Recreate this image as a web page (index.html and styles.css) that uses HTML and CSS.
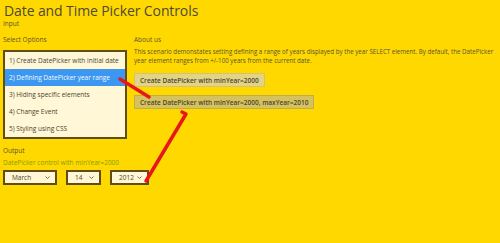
FILE: index.html
```html
<!DOCTYPE html>
<html lang="en">
<head>
    <meta charset="UTF-8">
    <title>Date and Time Picker Controls</title>
    <link rel="stylesheet" href="styles.css">
</head>
<body>
    <h1 class="title">Date and Time Picker Controls</h1>
    <div class="section-label">Input</div>

    <div class="input-row">
        <div class="options">
            <div class="sub-label">Select Options</div>
            <ul class="scenario-list">
                <li>1) Create DatePicker with initial date</li>
                <li class="selected">2) Defining DatePicker year range</li>
                <li>3) Hiding specific elements</li>
                <li>4) Change Event</li>
                <li>5) Styling using CSS</li>
            </ul>
        </div>

        <div class="about">
            <div class="sub-label">About us</div>
            <p class="desc">This scenario demonstates setting defining a range of years displayed by the year SELECT element. By default, the DatePicker year element ranges from +/-100 years from the current date.</p>
            <button class="btn">Create DatePicker with minYear=2000</button>
            <button class="btn btn-active">Create DatePicker with minYear=2000, maxYear=2010</button>
        </div>
    </div>

    <div class="section-label output-label">Output</div>
    <div class="status">DatePicker control with minYear=2000</div>
    <div class="pickers">
        <div class="pick pick-month">March<svg class="chev" width="5" height="3" viewBox="0 0 5 3"><polyline points="0.5,0.5 2.5,2.5 4.5,0.5" fill="none" stroke="#5a5130" stroke-width="0.8"/></svg></div>
        <div class="pick pick-day">14<svg class="chev" width="5" height="3" viewBox="0 0 5 3"><polyline points="0.5,0.5 2.5,2.5 4.5,0.5" fill="none" stroke="#5a5130" stroke-width="0.8"/></svg></div>
        <div class="pick pick-year">2012<svg class="chev" width="5" height="3" viewBox="0 0 5 3"><polyline points="0.5,0.5 2.5,2.5 4.5,0.5" fill="none" stroke="#5a5130" stroke-width="0.8"/></svg></div>
    </div>

    <!-- красные стрелки поверх -->
    <svg class="marks" width="500" height="243" viewBox="0 0 500 243">
        <line x1="120" y1="79" x2="149" y2="97" stroke="#e8161c" stroke-width="3.5" stroke-linecap="round"/>
        <polyline points="182,112 186,114 146,181" fill="none" stroke="#e8161c" stroke-width="3.5" stroke-linecap="round" stroke-linejoin="round"/>
    </svg>
</body>
</html>
```

FILE: styles.css
```css
body {
    margin: 0;
    padding: 0 0 0 3px;
    width: 497px;
    height: 243px;
    overflow: hidden;
    background-color: #ffd800;
    color: #5b5330;
    font-family: 'Open Sans', sans-serif;
    position: relative;
}

.title {
    margin: 0;
    padding-top: 2px;
    padding-left: 1px;
    font-size: 14px;
    font-weight: normal;
    line-height: 17px;
    color: #4f4a32;
    letter-spacing: -0.1px;
}

.section-label, .sub-label {
    font-size: 6.5px;
    line-height: 9px;
    color: #5b5330;
}

.input-row {
    display: flex;
    margin-top: 7px;
}

.options {
    width: 124px;
    flex-shrink: 0;
}

.options .sub-label {
    margin-bottom: 6px;
}

.about .sub-label {
    margin-bottom: 3px;
}

.scenario-list {
    list-style: none;
    margin: 0;
    padding: 0;
    width: 120px;
    border: 2px solid #5e4d15;
    background: #fff7d6;
}

.scenario-list li {
    height: 17px;
    line-height: 17px;
    padding-left: 4px;
    font-size: 6.5px;
    color: #4a4530;
    white-space: nowrap;
}

.scenario-list li.selected {
    background: #3c97f0;
    color: #f4f8ff;
}

.about {
    margin-left: 7px;
    width: 366px;
    flex-shrink: 0;
}

.desc {
    margin: 0 0 8px;
    font-size: 6.2px;
    line-height: 9px;
    color: #5b5330;
}

.btn {
    display: block;
    padding: 0 5px;
    height: 14px;
    font-family: inherit;
    font-size: 6.5px;
    font-weight: 600;
    color: #4a4535;
    background: #e3d385;
    border: 1px solid #d4c36e;
    margin-bottom: 8px;
}

.btn-active {
    background: #d6c25d;
    border: 1px solid #c2ad4a;
}

.output-label {
    margin-top: 7px;
}

.status {
    margin-top: 3px;
    font-size: 6.5px;
    line-height: 9px;
    color: #8b9d00;
}

.pickers {
    display: flex;
    gap: 9px;
    margin-top: 3px;
}

.pick {
    box-sizing: border-box;
    display: flex;
    justify-content: space-between;
    align-items: center;
    height: 15px;
    padding: 0 5px 0 7px;
    border: 2px solid #5e4d15;
    background: #fff7d6;
    font-size: 6.5px;
    color: #4a4530;
}

.pick-month { width: 54px; }
.pick-day { width: 35px; }
.pick-year { width: 39px; }

.marks {
    position: absolute;
    left: 0;
    top: 0;
    pointer-events: none;
}
```
